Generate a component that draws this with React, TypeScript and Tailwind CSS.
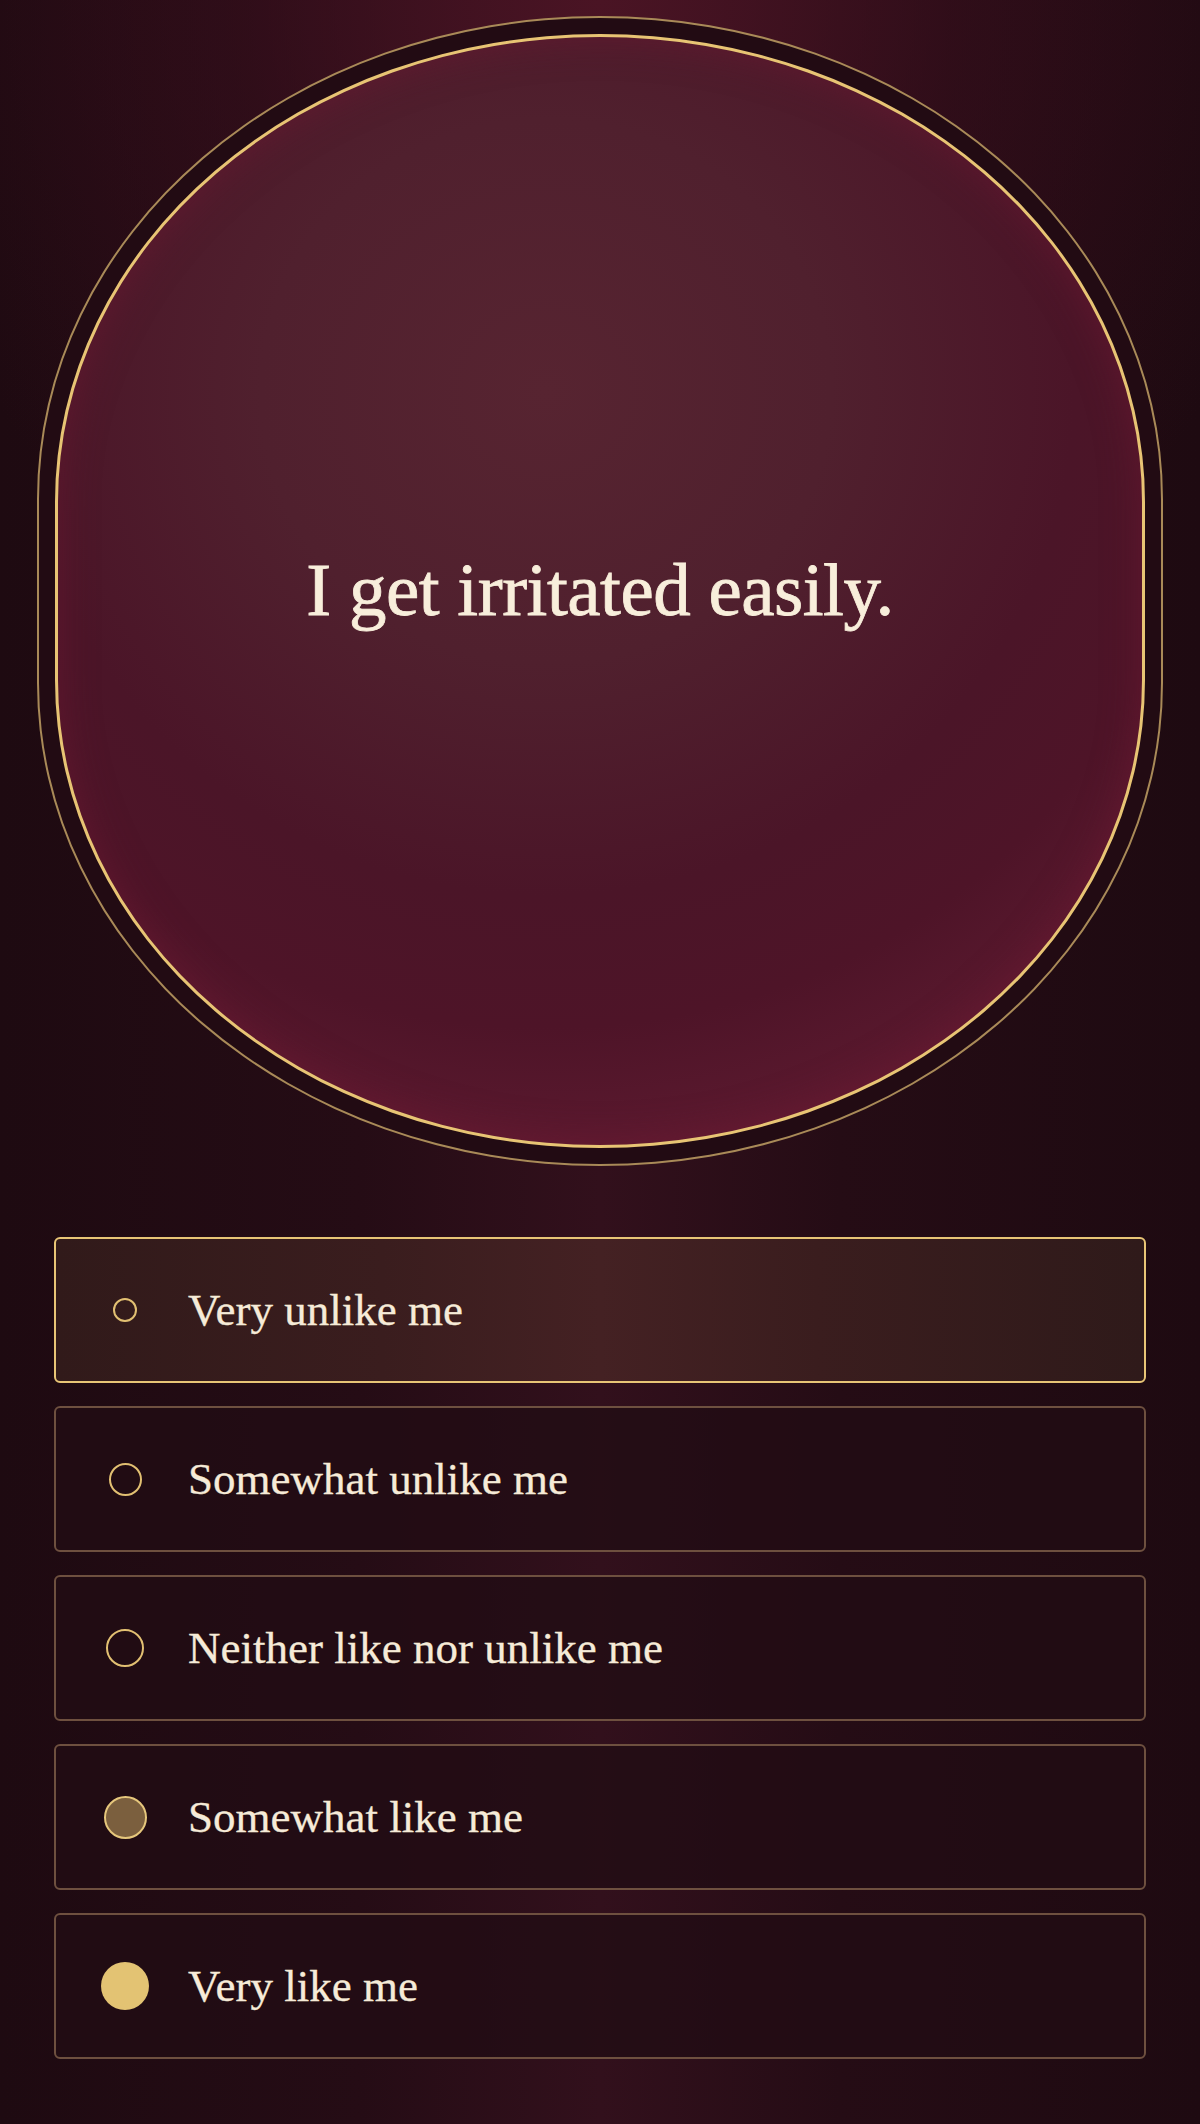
import React from "react";

type Option = {
  label: string;
  dot: string;
};

// the dot grows and fills as the answer moves toward "like me"
const options: Option[] = [
  { label: "Very unlike me", dot: "w-[24px] h-[24px] border-2 border-[#e2c072]" },
  { label: "Somewhat unlike me", dot: "w-[33px] h-[33px] border-2 border-[#e2c072]" },
  { label: "Neither like nor unlike me", dot: "w-[38px] h-[38px] border-2 border-[#e2c072]" },
  { label: "Somewhat like me", dot: "w-[43px] h-[43px] border-2 border-[#e6c77c] bg-[#7b5f3e]" },
  { label: "Very like me", dot: "w-[48px] h-[48px] bg-[#e3c373]" },
];

const App: React.FC = () => {
  const selected = 0;

  return (
    <div className="relative w-full min-h-[2124px] overflow-hidden bg-[#1f0b12] bg-[radial-gradient(ellipse_60%_35%_at_50%_0%,#4a1424_0%,rgba(60,15,30,0.5)_50%,transparent_100%),linear-gradient(to_right,#1e0a11_0%,#250c15_30%,#32101c_50%,#250c15_70%,#1e0a11_100%)] font-['Liberation_Serif',serif]">
      <div className="px-[37px] pt-[16px]">
        {/* Question card */}
        <div className="h-[1150px] rounded-[50%/42%] border-2 border-[#a98a58] bg-[#220b13] p-[16px]">
          <div className="flex items-center justify-center w-full h-full rounded-[50%/42%] border-[3px] border-[#e8c474] bg-[radial-gradient(ellipse_75%_70%_at_45%_32%,#572431_0%,#50202e_35%,#4b1528_65%,#4e1428_82%,#5d1a30_100%)] shadow-[inset_0_0_36px_rgba(110,25,50,0.6)]">
            <h1 className="text-[75px] leading-none text-[#f8eedb] tracking-[-0.5px] [-webkit-text-stroke:0.8px_#f8eedb] pb-[4px]">
              I get irritated easily.
            </h1>
          </div>
        </div>
      </div>

      {/* Answer options */}
      <div className="flex flex-col gap-[23px] px-[54px] pt-[71px] pb-[65px]">
        {options.map((option, index) => (
          <div
            key={option.label}
            className={
              index === selected
                ? "flex items-center gap-[39px] h-[146px] pl-[45px] rounded-md border-2 border-[#e8c576] bg-[linear-gradient(to_right,#311a1a_0%,#3a1d1e_30%,#442123_50%,#3a1d1e_70%,#2f1a1a_100%)]"
                : "flex items-center gap-[39px] h-[146px] pl-[45px] rounded-md border-2 border-[#6e503f] bg-[#220c14]/80"
            }
          >
            <div className="flex items-center justify-center w-12 h-12 shrink-0">
              <span className={"block rounded-full " + option.dot} />
            </div>
            <span className="text-[45px] leading-none text-[#f6ebd8] [-webkit-text-stroke:0.3px_#f6ebd8]">
              {option.label}
            </span>
          </div>
        ))}
      </div>
    </div>
  );
};

export default App;
